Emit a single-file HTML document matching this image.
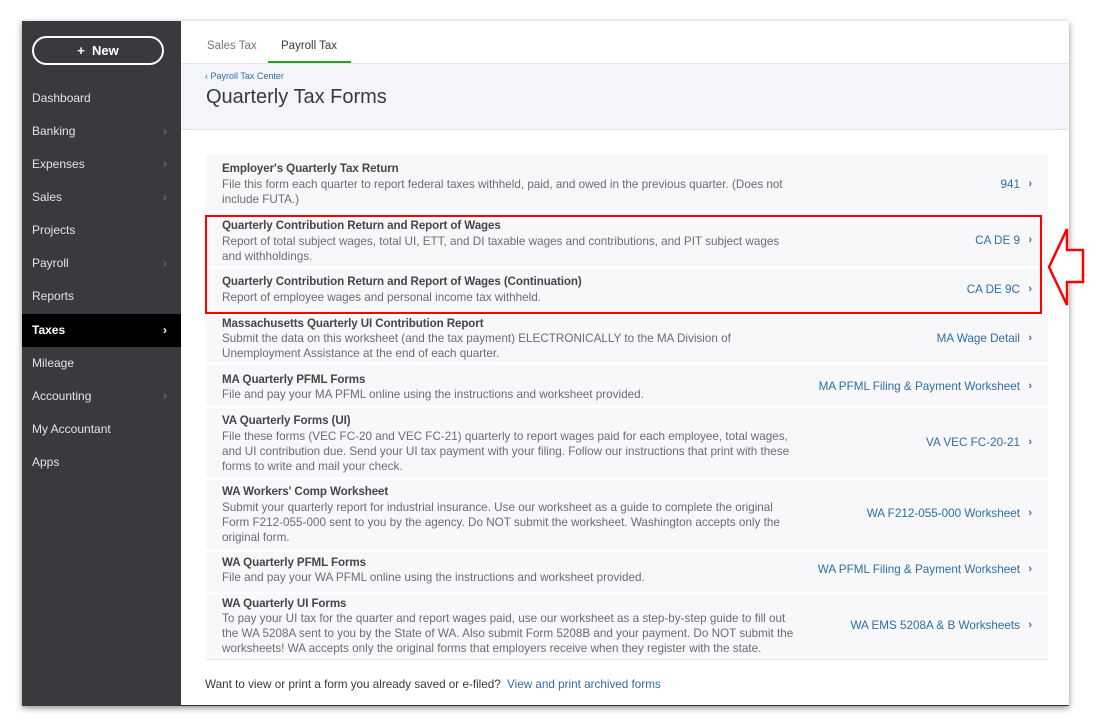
<!DOCTYPE html>
<html><head><meta charset="utf-8"><style>
*{margin:0;padding:0;box-sizing:border-box}
body{width:1101px;height:723px;background:#fff;font-family:"Liberation Sans",sans-serif;position:relative;overflow:hidden}
.frame{position:absolute;left:22px;top:21px;width:1047px;height:685px;background:#fff;box-shadow:0 2px 6px rgba(0,0,0,.45);border-bottom:1px solid #333}
.side{position:absolute;left:22px;top:21px;width:159px;height:685px;background:#393a3d}
.new{position:absolute;left:32px;top:36px;width:132px;height:29px;border:2px solid #fff;border-radius:15px;color:#fff;font-weight:bold;font-size:13px;text-align:center;line-height:25px}
.nav{position:absolute;left:22px;width:159px;height:33px;color:#e4e4e6;font-size:12px;line-height:33px;padding-left:10px}
.nav.act{background:#000;color:#fff;font-weight:bold}
.nav .ch{position:absolute;right:14px;top:0;color:#777;font-size:12px}
.nav.act .ch{color:#fff}
.tab{position:absolute;top:40px;font-size:11.5px;color:#777}
.hdr{position:absolute;left:181px;top:63px;width:887px;height:67px;background:#f4f5f8;border-top:1px solid #e3e5e8;border-bottom:1px solid #e3e5e8}
.row{position:absolute;left:206px;width:842px;background:#f8f8fa}
.t{position:absolute;left:16px;font-size:11.6px;color:#45464a;font-weight:bold;letter-spacing:-.1px}
.d{position:absolute;left:16px;font-size:11.7px;color:#6b6c72;line-height:15px;width:576px}
.l{position:absolute;right:28px;font-size:11.7px;color:#2e6da9}
.c{position:absolute;right:16px;font-size:11px;color:#2e6da9;font-weight:bold}
</style></head><body>
<div class="frame"></div>
<div class="side"></div>
<div class="new">+&nbsp;&nbsp;New</div>
<div class="nav" style="top:82px">Dashboard</div>
<div class="nav" style="top:115px">Banking<span class="ch">›</span></div>
<div class="nav" style="top:148px">Expenses<span class="ch">›</span></div>
<div class="nav" style="top:181px">Sales<span class="ch">›</span></div>
<div class="nav" style="top:214px">Projects</div>
<div class="nav" style="top:247px">Payroll<span class="ch">›</span></div>
<div class="nav" style="top:280px">Reports</div>
<div class="nav act" style="top:314px">Taxes<span class="ch">›</span></div>
<div class="nav" style="top:347px">Mileage</div>
<div class="nav" style="top:380px">Accounting<span class="ch">›</span></div>
<div class="nav" style="top:413px">My Accountant</div>
<div class="nav" style="top:446px">Apps</div>

<div class="tab" style="left:207px">Sales Tax</div>
<div class="tab" style="left:281px;color:#393a3d">Payroll Tax</div>
<div style="position:absolute;left:268px;top:61px;width:83px;height:3px;background:#2ca01c"></div>
<div class="hdr"></div>
<div style="position:absolute;left:205px;top:71px;font-size:9px;color:#2e6da9">‹ Payroll Tax Center</div>
<div style="position:absolute;left:206px;top:86px;font-size:20px;color:#393a3d">Quarterly Tax Forms</div>

<div class="row" style="top:155px;height:55px"><div class="t" style="top:7px">Employer's Quarterly Tax Return</div><div class="d" style="top:22px">File this form each quarter to report federal taxes withheld, paid, and owed in the previous quarter. (Does not include FUTA.)</div><div class="l" style="top:23px">941</div><div class="c" style="top:23px">›</div></div>
<div class="row" style="top:213px;height:53px"><div class="t" style="top:6px">Quarterly Contribution Return and Report of Wages</div><div class="d" style="top:21px">Report of total subject wages, total UI, ETT, and DI taxable wages and contributions, and PIT subject wages and withholdings.</div><div class="l" style="top:21px">CA DE 9</div><div class="c" style="top:21px">›</div></div>
<div class="row" style="top:269px;height:43px"><div class="t" style="top:6px">Quarterly Contribution Return and Report of Wages (Continuation)</div><div class="d" style="top:21px">Report of employee wages and personal income tax withheld.</div><div class="l" style="top:14px">CA DE 9C</div><div class="c" style="top:14px">›</div></div>
<div class="row" style="top:314px;height:48px"><div class="t" style="top:3px">Massachusetts Quarterly UI Contribution Report</div><div class="d" style="top:17px">Submit the data on this worksheet (and the tax payment) ELECTRONICALLY to the MA Division of Unemployment Assistance at the end of each quarter.</div><div class="l" style="top:18px">MA Wage Detail</div><div class="c" style="top:18px">›</div></div>
<div class="row" style="top:365px;height:40px"><div class="t" style="top:8px">MA Quarterly PFML Forms</div><div class="d" style="top:22px">File and pay your MA PFML online using the instructions and worksheet provided.</div><div class="l" style="top:15px">MA PFML Filing &amp; Payment Worksheet</div><div class="c" style="top:15px">›</div></div>
<div class="row" style="top:408px;height:69px"><div class="t" style="top:6px">VA Quarterly Forms (UI)</div><div class="d" style="top:21px">File these forms (VEC FC-20 and VEC FC-21) quarterly to report wages paid for each employee, total wages, and UI contribution due. Send your UI tax payment with your filing. Follow our instructions that print with these forms to write and mail your check.</div><div class="l" style="top:28px">VA VEC FC-20-21</div><div class="c" style="top:28px">›</div></div>
<div class="row" style="top:480px;height:69px"><div class="t" style="top:5px">WA Workers' Comp Worksheet</div><div class="d" style="top:20px">Submit your quarterly report for industrial insurance. Use our worksheet as a guide to complete the original Form F212-055-000 sent to you by the agency. Do NOT submit the worksheet. Washington accepts only the original form.</div><div class="l" style="top:27px">WA F212-055-000 Worksheet</div><div class="c" style="top:27px">›</div></div>
<div class="row" style="top:552px;height:40px"><div class="t" style="top:4px">WA Quarterly PFML Forms</div><div class="d" style="top:18px">File and pay your WA PFML online using the instructions and worksheet provided.</div><div class="l" style="top:11px">WA PFML Filing &amp; Payment Worksheet</div><div class="c" style="top:11px">›</div></div>
<div class="row" style="top:594px;height:66px;border-bottom:1px solid #e3e8ee"><div class="t" style="top:3px">WA Quarterly UI Forms</div><div class="d" style="top:17px">To pay your UI tax for the quarter and report wages paid, use our worksheet as a step-by-step guide to fill out the WA 5208A sent to you by the State of WA. Also submit Form 5208B and your payment. Do NOT submit the worksheets! WA accepts only the original forms that employers receive when they register with the state.</div><div class="l" style="top:25px">WA EMS 5208A &amp; B Worksheets</div><div class="c" style="top:25px">›</div></div>

<div style="position:absolute;left:205px;top:678px;font-size:11.7px;color:#393a3d">Want to view or print a form you already saved or e-filed? <span style="color:#2e6da9;margin-left:3px">View and print archived forms</span></div>

<div style="position:absolute;left:205px;top:215px;width:837px;height:99px;border:2px solid #f00"></div>
<svg style="position:absolute;left:1040px;top:222px" width="60" height="92"><polygon points="9,45 27,7 27,28 43,28 43,60 27,60 27,83" fill="#fff" stroke="#f00" stroke-width="2.5"/></svg>
</body></html>
